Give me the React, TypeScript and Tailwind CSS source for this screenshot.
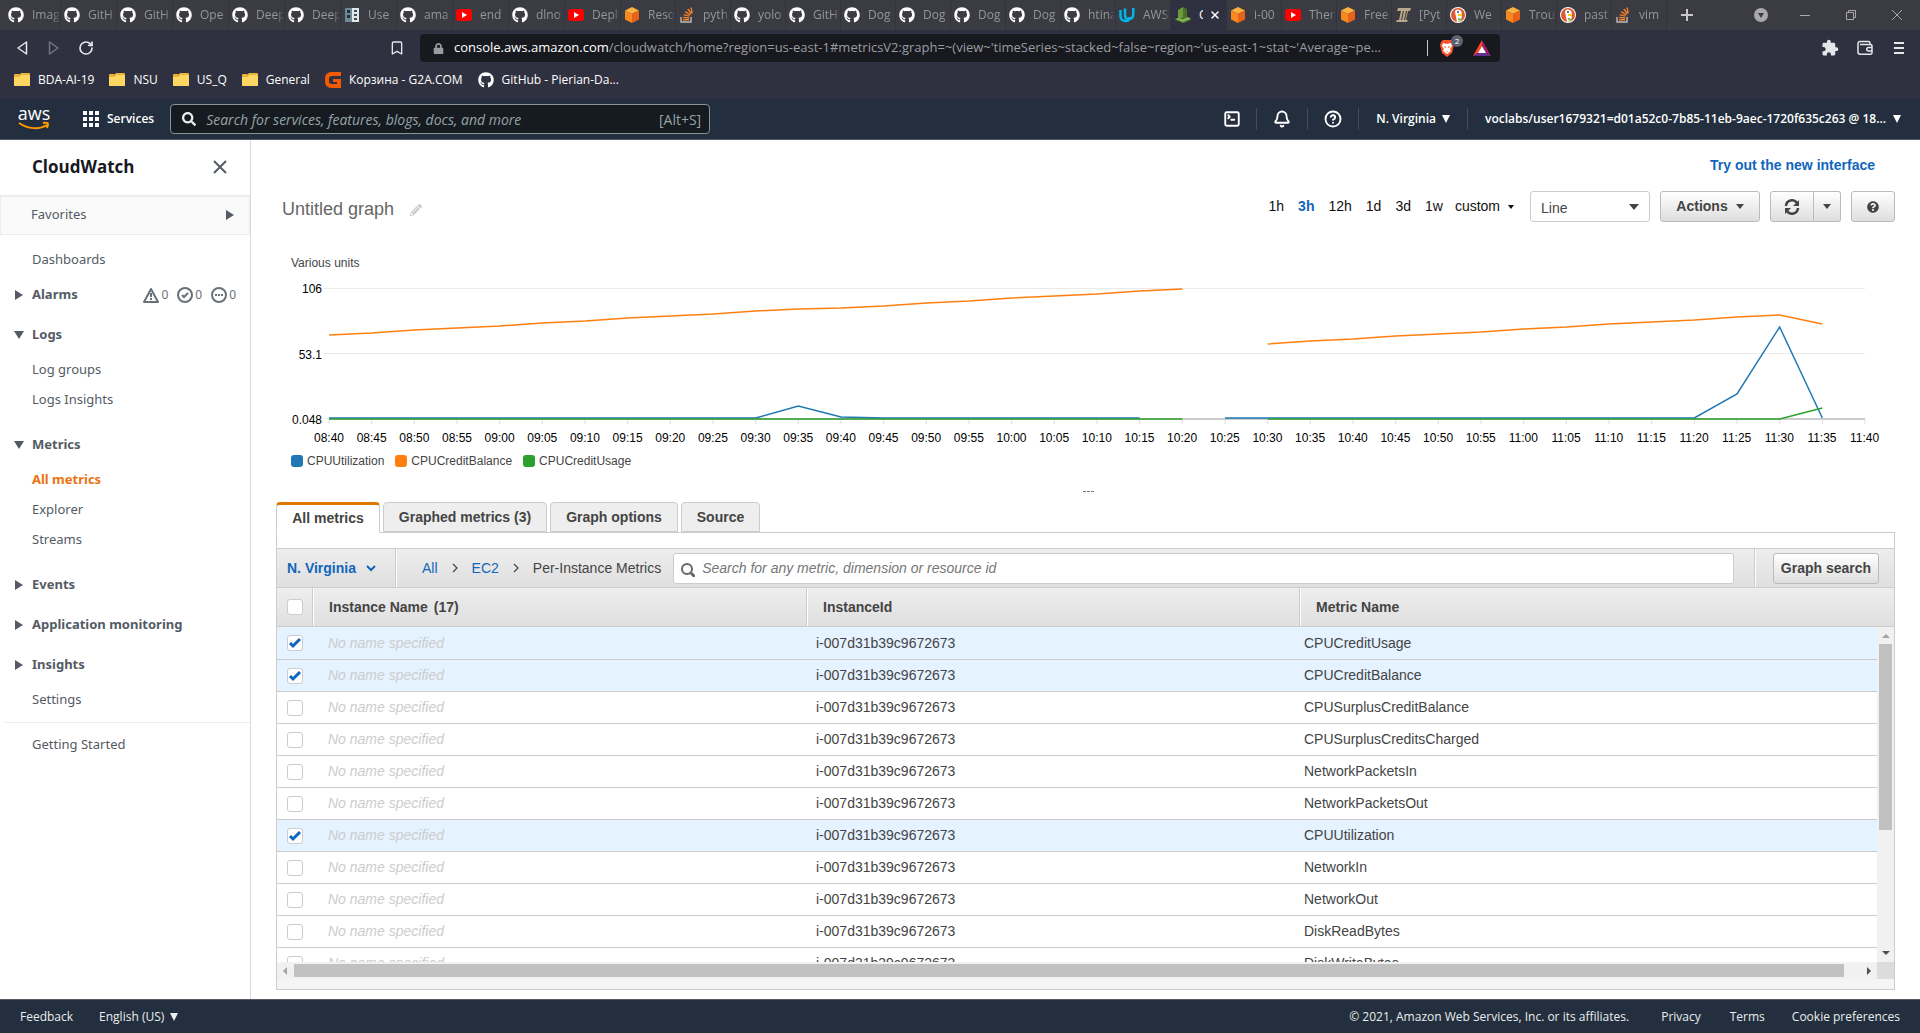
import React from "react";
import { FaGithub, FaLock, FaSearch, FaPencilAlt, FaQuestionCircle } from "react-icons/fa";
import { MdExtension } from "react-icons/md";
import { Bell, Bookmark, CircleHelp, SquareTerminal, X, RotateCw } from "lucide-react";

const UI = "font-['Open_Sans','Noto_Sans',sans-serif]";

/* ---------- small drawings ---------- */

const Cube = () => (
  <svg viewBox="0 0 16 16" className="size-4">
    <path d="M8 0 15 3.5 8 7 1 3.5Z" fill="#fbb040" />
    <path d="M1 3.5 8 7v9L1 12.5Z" fill="#f7891f" />
    <path d="M15 3.5 8 7v9l7-3.5Z" fill="#e8621a" />
  </svg>
);

const CloudWatchIcon = () => (
  <svg viewBox="0 0 16 16" className="size-4 shrink-0">
    <path d="M3 3 8 0v11l-5 1Z" fill="#6c9a3a" />
    <path d="M8 0l4 2v9l-4 1Z" fill="#4b7129" />
    <path d="M0 12l3-1 5 1 5-2 3 2-8 4Z" fill="#86b353" />
    <path d="M0 12l8 3v1l-8-3Zm16 0-8 3v1l8-3Z" fill="#4b7129" />
  </svg>
);

const StackOverflow = () => (
  <svg viewBox="0 0 16 16" className="size-4" fill="none" strokeWidth="1.4">
    <path d="M2 10v5h10v-5" stroke="#bcbbbb" />
    <path d="M4 12.800h6M4.100 10.400l6 .6M4.700 7.600l5.800 1.600M6.200 4.600l5.200 3.200M8.800 2l3.700 4.800M12 .5l1.200 5.800" stroke="#f48024" />
  </svg>
);

const Udacity = () => (
  <svg viewBox="0 0 16 16" className="size-4" fill="none" stroke="#02b3e4" strokeWidth="2.6">
    <path d="M1.500 3v6c0 3 2 5 5 5s4-2 4-4" />
    <path d="M6 1.500v7c0 2 1 3.500 3 3.500 3 0 5.300-1.500 5.300-5V1" />
  </svg>
);

const Duck = () => (
  <svg viewBox="0 0 16 16" className="size-4">
    <circle cx="8" cy="8" r="8" fill="#fff" />
    <circle cx="8" cy="8" r="7" fill="#de5833" />
    <path d="M5 5c0-2 2-3 4-2 2 0 3 2 3 5l-1 6-4 1Z" fill="#fff" />
    <path d="M8 7h4v2H8Z" fill="#fdd20a" />
    <path d="m8 11 4 1-1 2-3-1Z" fill="#67bd47" />
    <circle cx="8" cy="5" r="1" fill="#2d4f8e" />
  </svg>
);

const Pages = () => (
  <svg viewBox="0 0 16 16" className="size-4">
    <path d="M1 1h7v14H1Z" fill="#6f8796" />
    <path d="M8 1h7v14H8Z" fill="#dfe7eb" />
    <path d="M3 3h3v3H3Zm0 5h3v3H3Z" fill="#22303a" />
    <path d="M10 3h3v2h-3Zm0 4h3v2h-3Zm0 4h3v2h-3Z" fill="#3a4f5c" />
  </svg>
);

const Italic = () => (
  <svg viewBox="0 0 16 16" className="size-4">
    <path d="M3 1h13l-1 3h-2l-2 9h2l-1 2H1l1-2h2L6 4H2Z" fill="#b8a88c" />
    <path d="M8 4h1L7 13H6Zm3 0h1l-2 9H9Z" fill="#3c3325" />
  </svg>
);

const G2A = () => (
  <svg viewBox="0 0 16 16" className="size-4">
    <path d="M16 0v4H7a3 3 0 0 0-3 3v2a3 3 0 0 0 3 3h5v-2H8V7h8v9H6a6 6 0 0 1-6-6V6a6 6 0 0 1 6-6Z" fill="#f05a00" />
  </svg>
);

const Folder = () => (
  <svg viewBox="0 0 16 14" className="h-[14px] w-4">
    <path d="M0 2a1 1 0 0 1 1-1h4l2 2v10H1a1 1 0 0 1-1-1Z" fill="#e9b43c" />
    <path d="M6 1 7 0h8a1 1 0 0 1 1 1v12H1Z" fill="#e9b43c" />
    <path d="M0 4h6l1-2h8a1 1 0 0 1 1 1v9a1 1 0 0 1-1 1H1a1 1 0 0 1-1-1Z" fill="#fdd663" />
  </svg>
);

const Lion = () => (
  <svg viewBox="0 0 16 18" className="h-[18px] w-4">
    <path d="M4 1h8l2 2 1 3-2 8-5 4-5-4L1 6l1-3Z" fill="#fb542b" />
    <path d="m4 4 4 1 4-1 1 3-2 3 1 2-4 3-4-3 1-2-2-3Z" fill="#fff" />
    <path d="m5 7 2 1v1L5 8Zm6 0L9 8v1l2-1ZM7 12h2l-1 1Z" fill="#fb542b" />
  </svg>
);

const Bat = () => (
  <svg viewBox="0 0 18 16" className="h-4 w-[18px]">
    <path d="M9 0v6l-4 7-5 3Z" fill="#ff4724" />
    <path d="M9 0v6l4 7 5 3Z" fill="#9e1f63" />
    <path d="M0 16l5-3h8l5 3Z" fill="#662d91" />
    <path d="m9 6 4 7H5Z" fill="#fff" />
  </svg>
);

const Wallet = () => (
  <svg viewBox="0 0 16 16" className="size-4" fill="none" stroke="#e6e6ea" strokeWidth="1.5">
    <path d="M13 4.500V3a1.500 1.500 0 0 0-1.500-1.500H3A2 2 0 0 0 1 3.500V12a2.200 2.200 0 0 0 2.200 2.200h10.300A1.500 1.500 0 0 0 15 12.700V6a1.500 1.500 0 0 0-1.500-1.500H3" />
    <path d="M15 7.500h-3.500a1.800 1.800 0 0 0 0 3.600H15" />
  </svg>
);

const Caret = ({ className = "" }: { className?: string }) => (
  <svg viewBox="0 0 10 6" preserveAspectRatio="none" className={className} fill="currentColor">
    <path d="M0 0h10L5 6Z" />
  </svg>
);

const Tri = ({ open = false }: { open?: boolean }) => (
  <svg viewBox="0 0 10 10" className="size-[10px]" fill="#545b64">
    {open ? <path d="M0 1h10L5 9Z" /> : <path d="M1 0v10l8-5Z" />}
  </svg>
);

const Chevron = ({ className = "", weight = 1.2 }: { className?: string; weight?: number }) => (
  <svg viewBox="0 0 8 10" className={className} fill="none" stroke="currentColor" strokeWidth={weight}>
    <path d="m2 1 4 4-4 4" />
  </svg>
);

/* ---------- browser chrome ---------- */

const gh = <FaGithub className="size-4 text-white" />;
const yt = (
  <span className="flex size-4 items-center">
    <svg viewBox="0 0 16 12" className="h-3 w-4">
      <rect width="16" height="12" rx="3" fill="#f00" />
      <path d="m6 3 5 3-5 3Z" fill="#fff" />
    </svg>
  </span>
);
const so = <StackOverflow />;

const TABS_A: [React.ReactNode, string][] = [
  [gh, "GitH"], [gh, "GitH"], [gh, "Ope"], [gh, "Deep"], [gh, "Deep"], [<Pages />, "Use"],
  [gh, "ama"], [yt, "end"], [gh, "dlno"], [yt, "Depl"],
];
const TABS_B: [React.ReactNode, string][] = [
  [<Cube />, "Reso"], [so, "pyth"], [gh, "yolo"], [gh, "GitH"], [gh, "Dog"], [gh, "Dog"], [gh, "Dog"], [gh, "Dog"],
  [gh, "htina"], [<Udacity />, "AWS"],
];
const TABS_C: [React.ReactNode, string][] = [
  [<Cube />, "i-00"], [yt, "Ther"], [<Cube />, "Free"], [<Italic />, "[Pyt"], [<Duck />, "We"], [<Cube />, "Trou"],
  [<Duck />, "past"], [so, "vim"],
];

function Tab({ icon, text, className }: { icon: React.ReactNode; text: string; className: string }) {
  return (
    <button className={`flex h-full shrink-0 items-center gap-2 border-r border-[#33333b] ${className}`}>
      <span className="shrink-0">{icon}</span>
      <span className="min-w-0 flex-1 overflow-hidden text-left whitespace-nowrap [mask-image:linear-gradient(to_right,#000_75%,transparent)]">
        {text}
      </span>
    </button>
  );
}

function TabStrip() {
  return (
    <div className="flex h-[30px] items-center bg-[#3b3b44] text-[12px] text-[#95959c]">
      <Tab icon={gh} text="Imag" className="w-[61px] pl-2" />
      {TABS_A.map(([i, t], k) => <Tab key={k} icon={i} text={t} className="w-[56px] pl-[3px]" />)}
      {TABS_B.map(([i, t], k) => <Tab key={k} icon={i} text={t} className="w-[55px] pl-[3px]" />)}
      <button className="flex h-full w-[56px] shrink-0 items-center rounded-t bg-[#2f3140] pl-1 text-white">
        <CloudWatchIcon />
        <span className="ml-2 w-1 overflow-hidden text-left">C</span>
        <X className="ml-[6px] size-3" strokeWidth={3} />
      </button>
      {TABS_C.map(([i, t], k) => <Tab key={k} icon={i} text={t} className="w-[55px] pl-[3px]" />)}
      <button aria-label="New tab" className="ml-[13px] text-[#c8c8cc]">
        <svg viewBox="0 0 14 14" className="size-[14px]" stroke="currentColor" strokeWidth="2"><path d="M7 1v12M1 7h12" /></svg>
      </button>
      <div className="ml-auto flex items-center gap-7 pr-[14px] text-[#a8a8ae]">
        <button aria-label="Search tabs">
          <svg viewBox="0 0 14 14" className="size-[14px]"><circle cx="7" cy="7" r="7" fill="#a8a8ae" /><path d="M4 5h6l-3 5Z" fill="#3b3b44" /></svg>
        </button>
        <button aria-label="Minimize" className="mx-1">
          <svg viewBox="0 0 10 10" className="size-[10px]" stroke="currentColor"><path d="M0 5.500h10" /></svg>
        </button>
        <button aria-label="Restore" className="mx-1">
          <svg viewBox="0 0 10 10" className="size-[10px]" stroke="currentColor" fill="none"><path d="M.5 2.500h7v7h-7ZM2.500 2.500v-2h7v7h-2" /></svg>
        </button>
        <button aria-label="Close window" className="mx-1">
          <svg viewBox="0 0 10 10" className="size-[10px]" stroke="currentColor"><path d="m0 0 10 10M10 0 0 10" /></svg>
        </button>
      </div>
    </div>
  );
}

function AddressBar() {
  return (
    <div className="flex h-9 items-center pl-4 text-[#e6e6ea]">
      <button aria-label="Back">
        <svg viewBox="0 0 12 14" className="h-[14px] w-3" fill="none" stroke="#e6e6ea" strokeWidth="1.500" strokeLinejoin="round"><path d="M10.500 1v12L2 7Z" /></svg>
      </button>
      <button aria-label="Forward" className="ml-5">
        <svg viewBox="0 0 12 14" className="h-[14px] w-3" fill="none" stroke="#72737f" strokeWidth="1.500" strokeLinejoin="round"><path d="M1.500 1v12L10 7Z" /></svg>
      </button>
      <button aria-label="Reload" className="ml-[18px]"><RotateCw className="size-4" strokeWidth={2.5} /></button>
      <button aria-label="Bookmark" className="ml-[295px]"><Bookmark className="size-4" /></button>
      <div className="ml-[15px] flex h-7 w-[1080px] items-center rounded bg-[#17191f] pl-[13px] text-[13px] text-[#9b9ca3]">
        <FaLock className="size-[11px]" />
        <span className="ml-[10px] flex-1 whitespace-nowrap"><span className="text-white">console.aws.amazon.com</span>/cloudwatch/home?region=us-east-1#metricsV2:graph=~(view~'timeSeries~stacked~false~region~'us-east-1~stat~'Average~pe...</span>
        <span className="ml-2 h-4 w-px bg-[#c8c8cc]" />
        <button aria-label="Brave Shields" className="relative ml-[11px]">
          <Lion />
          <span className="absolute -top-1 left-3 flex size-3 items-center justify-center rounded-full bg-[#5d6170] text-[8px] text-white">2</span>
        </button>
        <button aria-label="Rewards" className="mr-[9px] ml-[18px]"><Bat /></button>
      </div>
      <div className="ml-auto flex items-center gap-[18px] pr-4">
        <button aria-label="Extensions"><MdExtension className="size-[18px]" /></button>
        <button aria-label="Wallet"><Wallet /></button>
        <button aria-label="Menu" className="ml-[3px] flex w-[10px] flex-col gap-[3px]">
          <span className="h-[2px] bg-[#e6e6ea]" /><span className="h-[2px] bg-[#e6e6ea]" /><span className="h-[2px] bg-[#e6e6ea]" />
        </button>
      </div>
    </div>
  );
}

const BOOKMARKS: [React.ReactNode, string][] = [
  [<Folder />, "BDA-AI-19"], [<Folder />, "NSU"], [<Folder />, "US_Q"], [<Folder />, "General"],
  [<G2A />, "Корзина - G2A.COM"], [gh, "GitHub - Pierian-Da..."],
];

function Bookmarks() {
  return (
    <div className="flex h-[33px] items-center gap-[15px] pb-[5px] pl-[14px] text-[12px] text-white">
      {BOOKMARKS.map(([icon, text]) => (
        <a key={text} href="#" className="flex items-center gap-2 whitespace-nowrap">{icon}{text}</a>
      ))}
    </div>
  );
}

/* ---------- AWS header ---------- */

const Rule = () => <span className="h-[22px] w-px bg-[#414d5c]" />;

function AwsHeader() {
  return (
    <header className="flex h-[41px] shrink-0 items-center border-b border-[#545b64] bg-[#232f3e] text-[12px] font-semibold text-white">
      <a href="#" aria-label="AWS" className="ml-[18px] flex w-8 flex-col items-center">
        <span className="h-[13px] text-[18px] leading-[10px] font-normal">aws</span>
        <svg viewBox="0 0 32 9" className="h-[9px] w-8" fill="none" stroke="#ff9900" strokeWidth="2">
          <path d="M1 2c9 6 20 7 28 2M25 2c5-1 6 0 4 5" />
        </svg>
      </a>
      <span className="ml-4"><Rule /></span>
      <button className="ml-[17px] flex items-center gap-2">
        <svg viewBox="0 0 16 16" className="size-4" fill="#fff">
          {[0, 6, 12].map((y) => [0, 6, 12].map((x) => <rect key={`${x}-${y}`} x={x} y={y} width="4" height="4" />))}
        </svg>
        Services
      </button>
      <label className="ml-4 flex h-[30px] w-[540px] items-center rounded-sm border border-[#879596] bg-[#161a21] pr-2 pl-[11px] font-normal text-[#95a5a6]">
        <FaSearch className="size-[14px] text-[#eaeded]" />
        <input aria-label="Search AWS" className="ml-[10px] min-w-0 flex-1 bg-transparent text-[14px] italic outline-none placeholder:text-[#95a5a6] placeholder:italic" placeholder="Search for services, features, blogs, docs, and more" />
        <span className="text-[14px]">[Alt+S]</span>
      </label>
      <div className="ml-auto flex items-center">
        <button aria-label="CloudShell" className="mr-[15px]"><SquareTerminal className="size-[18px]" strokeWidth={2.5} /></button>
        <Rule />
        <button aria-label="Notifications" className="mx-4"><Bell className="size-[18px]" strokeWidth={2.5} /></button>
        <Rule />
        <button aria-label="Help" className="mx-4"><CircleHelp className="size-[18px]" strokeWidth={2.5} /></button>
        <Rule />
        <button className="mx-[17px] flex items-center gap-[6px]">N. Virginia <Caret className="h-2 w-2" /></button>
        <Rule />
        <button className="mr-[19px] ml-[17px] flex items-center gap-[7px] whitespace-nowrap">voclabs/user1679321=d01a52c0-7b85-11eb-9aec-1720f635c263 @ 18... <Caret className="h-2 w-2" /></button>
      </div>
    </header>
  );
}

/* ---------- sidebar ---------- */

const Item = ({ children, active = false }: { children: React.ReactNode; active?: boolean }) => (
  <a href="#" className={`flex h-[30px] items-center pl-8 ${active ? "font-bold text-[#ec7211]" : ""}`}>{children}</a>
);
const Section = ({ children, open = false, extra }: { children: React.ReactNode; open?: boolean; extra?: React.ReactNode }) => (
  <div className="flex h-10 items-center justify-between pr-[14px] pl-[14px]">
    <button className="flex items-center gap-2 font-bold"><Tri open={open} />{children}</button>
    {extra}
  </div>
);

function AlarmCounts() {
  return (
    <div className="flex items-center gap-[9px] text-[12px] text-[#687078]">
      <span className="flex items-center gap-[2px]">
        <svg viewBox="0 0 16 16" className="size-4" fill="none" stroke="currentColor" strokeWidth="2"><path d="M8 2 15 15H1Z" strokeLinejoin="round" /><path d="M8 6v4M8 11v2" /></svg>0
      </span>
      <span className="flex items-center gap-[2px]">
        <svg viewBox="0 0 16 16" className="size-4" fill="none" stroke="currentColor" strokeWidth="2"><circle cx="8" cy="8" r="7" /><path d="m5 8 2 2 4-4" /></svg>0
      </span>
      <span className="flex items-center gap-[2px]">
        <svg viewBox="0 0 16 16" className="size-4" fill="none" stroke="currentColor" strokeWidth="2"><circle cx="8" cy="8" r="7" /><path d="M4 8h2M7 8h2M10 8h2" /></svg>0
      </span>
    </div>
  );
}

function Sidebar() {
  return (
    <nav className="w-[251px] shrink-0 border-r border-[#d5dbdb] bg-white font-['Noto_Sans',sans-serif] text-[13px] text-[#545b64]">
      <div className="flex h-[55px] items-center justify-between pr-[22px] pb-[2px] pl-8">
        <h2 className="font-['Open_Sans',sans-serif] text-[17px] font-bold text-[#16191f]">CloudWatch</h2>
        <button aria-label="Close navigation">
          <svg viewBox="0 0 16 16" className="size-4" stroke="#545b64" strokeWidth="2"><path d="m2 2 12 12M14 2 2 14" /></svg>
        </button>
      </div>
      <button className="flex h-10 w-full items-center justify-between border border-t-2 border-[#eaeded] bg-[#fafafa] pr-[14px] pb-[2px] pl-[30px]">
        Favorites <Tri />
      </button>
      <div className="pt-[10px]">
        <Item>Dashboards</Item>
        <Section extra={<AlarmCounts />}>Alarms</Section>
        <Section open>Logs</Section>
        <Item>Log groups</Item>
        <Item>Logs Insights</Item>
        <div className="pt-[10px]"><Section open>Metrics</Section></div>
        <Item active>All metrics</Item>
        <Item>Explorer</Item>
        <Item>Streams</Item>
        <div className="pt-[10px]"><Section>Events</Section></div>
        <Section>Application monitoring</Section>
        <Section>Insights</Section>
        <Item>Settings</Item>
        <hr className="my-[7px] ml-[5px] border-[#eaeded]" />
        <Item>Getting Started</Item>
      </div>
    </nav>
  );
}

/* ---------- graph ---------- */

const BTN = "flex h-[31px] items-center justify-center rounded-[3px] border border-[#bbb] bg-linear-to-b from-white to-[#dedede] font-bold text-[#444]";

function GraphToolbar() {
  return (
    <div className="flex h-[31px] items-center text-[14px] text-[#111]">
      <h1 className="flex items-center gap-4 pt-[6px] pl-[6px] text-[18px] text-[#666]">
        Untitled graph <button aria-label="Rename graph"><FaPencilAlt className="size-3 text-[#ccc]" /></button>
      </h1>
      <div className="ml-auto flex items-center gap-[14px] pr-4">
        <button>1h</button>
        <button className="font-bold text-[#1166bb]">3h</button>
        <button>12h</button>
        <button>1d</button>
        <button>3d</button>
        <button>1w</button>
        <button className="-ml-[2px] flex items-center gap-2">custom <Caret className="h-1 w-[6px]" /></button>
      </div>
      <div className="flex items-center gap-[10px]">
        <label className="relative flex items-center">
          <select aria-label="Graph type" className="h-[31px] w-[120px] appearance-none rounded-[3px] border border-[#ccc] bg-white pt-[3px] pl-[10px] text-[#444]">
            <option>Line</option>
          </select>
          <Caret className="pointer-events-none absolute right-[11px] h-[6px] w-[10px] text-[#444]" />
        </label>
        <button className={`${BTN} w-[100px] gap-2`}>Actions <Caret className="h-[5px] w-2" /></button>
        <div className="flex">
          <button aria-label="Refresh" className={`${BTN} w-11 rounded-r-none`}>
            <svg viewBox="0 0 16 16" className="size-4" fill="none" stroke="#444" strokeWidth="2.500">
              <path d="M2 7a6 6 0 0 1 11-3M14 9a6 6 0 0 1-11 3" /><path d="M15 1v6H9ZM1 15V9h6Z" fill="#444" stroke="none" />
            </svg>
          </button>
          <button aria-label="Refresh options" className={`${BTN} w-[27px] rounded-l-none border-l-0`}><Caret className="h-[5px] w-2" /></button>
        </div>
        <button aria-label="Help" className={`${BTN} w-11`}><FaQuestionCircle className="size-3" /></button>
      </div>
    </div>
  );
}

const TIMES = Array.from({ length: 37 }, (_, i) => {
  const m = 8 * 60 + 40 + i * 5;
  return `${String(Math.floor(m / 60)).padStart(2, "0")}:${String(m % 60).padStart(2, "0")}`;
});
const STEP = 40;
const line = (start: number, ys: number[]) => ys.map((y, i) => `${(start + i) * STEP},${y}`).join(" ");
const flat = (n: number, y: number) => Array.from({ length: n }, () => y);

const BALANCE_1 = [49, 47, 44, 42, 40, 37, 35, 32, 30, 28, 25, 23, 22, 20, 17, 15, 12, 10, 8, 5, 3];
const BALANCE_2 = [58, 55, 53, 50, 48, 46, 43, 41, 38, 36, 34, 31, 29, 38];
const UTIL_1 = [...flat(11, 132), 120, 131, ...flat(7, 132)];
const UTIL_2 = [...flat(12, 132), 108, 41, 132];
const USAGE_1 = flat(21, 133);
const USAGE_2 = [...flat(13, 133), 122];

function Chart() {
  return (
    <figure className="pt-[33px] pl-[15px] text-[12px]">
      <figcaption className="leading-4 text-[#444]">Various units</figcaption>
      <div className="mt-[10px] flex pr-[30px]">
        <div className="flex h-[147px] w-[31px] shrink-0 flex-col items-end justify-between leading-4 text-black">
          <span>106</span><span>53.1</span><span>0.048</span>
        </div>
        <div className="ml-[7px] flex-1 pt-[5px]">
          <svg viewBox="0 0 1440 140" preserveAspectRatio="none" className="block h-[140px] w-full overflow-visible" fill="none">
            <g stroke="#eaeaea">
              <path d="M-5 2.500H1440M-5 67.500H1440M-5 132.500H0" />
              {TIMES.map((t, i) => <path key={t} d={`M${i * STEP} 133v5`} stroke="#ddd" vectorEffect="non-scaling-stroke" />)}
            </g>
            <path d="M0 133H1440" stroke="#ccc" strokeWidth="2" />
            <g strokeWidth="1.500">
              <polyline points={line(0, UTIL_1)} stroke="#1f77b4" vectorEffect="non-scaling-stroke" />
              <polyline points={line(21, UTIL_2)} stroke="#1f77b4" vectorEffect="non-scaling-stroke" />
              <polyline points={line(0, BALANCE_1)} stroke="#ff7f0e" vectorEffect="non-scaling-stroke" />
              <polyline points={line(22, BALANCE_2)} stroke="#ff7f0e" vectorEffect="non-scaling-stroke" />
              <polyline points={line(0, USAGE_1)} stroke="#2ca02c" vectorEffect="non-scaling-stroke" />
              <polyline points={line(22, USAGE_2)} stroke="#2ca02c" vectorEffect="non-scaling-stroke" />
            </g>
          </svg>
          <div className="mt-[4px] flex justify-between leading-4 text-black">
            {TIMES.map((t) => <span key={t} className="flex w-0 justify-center"><span>{t}</span></span>)}
          </div>
        </div>
      </div>
      <div className="mt-[7px] flex gap-[11px] leading-4 text-[#444]">
        <span className="flex items-center gap-1"><i className="size-3 rounded-[3px] bg-[#1f77b4]" />CPUUtilization</span>
        <span className="flex items-center gap-1"><i className="size-3 rounded-[3px] bg-[#ff7f0e]" />CPUCreditBalance</span>
        <span className="flex items-center gap-1"><i className="size-3 rounded-[3px] bg-[#2ca02c]" />CPUCreditUsage</span>
      </div>
      <div className="mt-[22px] flex h-[2px] justify-center gap-px pr-[10px]">
        <i className="h-px w-[3px] bg-[#777]" /><i className="h-px w-[3px] bg-[#777]" /><i className="h-px w-[3px] bg-[#777]" />
      </div>
    </figure>
  );
}

/* ---------- metrics panel ---------- */

function Check({ label, checked = false }: { label: string; checked?: boolean }) {
  return (
    <span className="relative ml-[10px] block size-4">
      <input type="checkbox" aria-label={label} defaultChecked={checked} className="peer block size-4 appearance-none rounded-[3px] border border-[#ccc] bg-white" />
      <svg viewBox="0 0 16 16" className="pointer-events-none absolute inset-0 hidden size-4 peer-checked:block" fill="none" stroke="#1166bb" strokeWidth="3">
        <path d="m3 8 3 3 7-7" />
      </svg>
    </span>
  );
}

const METRICS = [
  "CPUCreditUsage", "CPUCreditBalance", "CPUSurplusCreditBalance", "CPUSurplusCreditsCharged", "NetworkPacketsIn", "NetworkPacketsOut",
  "CPUUtilization", "NetworkIn", "NetworkOut", "DiskReadBytes", "DiskWriteBytes",
];
const SELECTED = ["CPUCreditUsage", "CPUCreditBalance", "CPUUtilization"];
const TH = "h-[39px] border-b border-[#ccc] text-left font-bold";
const TH_DIV = "border-l pl-4 shadow-[inset_1px_0_0_#fff]";

function MetricsTable() {
  return (
    <div className="relative min-h-0 flex-1 overflow-hidden">
      <table className="w-full table-fixed border-separate border-spacing-0 text-[14px]">
        <colgroup><col className="w-[35px]" /><col className="w-[494px]" /><col className="w-[493px]" /><col /></colgroup>
        <thead className="bg-linear-to-b from-[#eee] to-[#dfdfdf] text-[#444]">
          <tr>
            <th className={TH}><Check label="Select all metrics" /></th>
            <th className={`${TH} ${TH_DIV}`}>Instance Name<span className="ml-[6px]">(17)</span></th>
            <th className={`${TH} ${TH_DIV}`}>InstanceId</th>
            <th className={`${TH} ${TH_DIV}`}>Metric Name</th>
          </tr>
        </thead>
        <tbody>
          {METRICS.map((m, i) => {
            const on = SELECTED.includes(m);
            return (
              <tr key={m} className={on ? "bg-[#e5f2ff]" : "bg-white"}>
                <td className={`border-b border-[#ccc] ${i === 0 ? "h-[33px]" : "h-8"}`}><Check label={m} checked={on} /></td>
                <td className="border-b border-[#ccc] pl-4 text-[#ccc] italic">No name specified</td>
                <td className="border-b border-[#ccc] pl-[10px] text-[#444]">i-007d31b39c9672673</td>
                <td className="border-b border-[#ccc] pl-[5px] text-[#444]">{m}</td>
              </tr>
            );
          })}
        </tbody>
      </table>
      <div className="absolute top-[39px] right-0 bottom-0 flex w-[17px] flex-col items-center bg-[#f1f1f1]">
        <Caret className="mt-[7px] mb-[6px] h-1 w-2 rotate-180 text-[#a3a3a3]" />
        <div className="h-[186px] w-[13px] bg-[#c1c1c1]" />
        <Caret className="mt-auto mb-[7px] h-1 w-2 text-[#505050]" />
      </div>
    </div>
  );
}

const TAB = "h-[30px] rounded-t border border-[#ccc] bg-[#eee]";

function MetricsPanel() {
  return (
    <section className="mt-[9px] flex min-h-0 flex-1 flex-col text-[14px] text-[#444]">
      <div className="-mb-px flex gap-[3px] font-bold">
        <button className="z-10 h-[31px] w-[104px] rounded-t border border-t-[3px] border-[#ccc] border-t-[#e07700] border-b-white bg-white">All metrics</button>
        <button className={`${TAB} w-[164px]`}>Graphed metrics (3)</button>
        <button className={`${TAB} w-[128px]`}>Graph options</button>
        <button className={`${TAB} w-[79px]`}>Source</button>
      </div>
      <div className="flex min-h-0 flex-1 flex-col border border-[#ccc] pt-[15px]">
        <div className="flex h-10 shrink-0 items-center border-y border-[#ccc] bg-linear-to-b from-[#eee] to-[#dfdfdf]">
          <button className="flex h-full w-[119px] items-center gap-[11px] border-r border-[#ccc] pl-[10px] font-bold text-[#1166bb] shadow-[1px_0_0_#fff]">
            N. Virginia <Chevron className="h-[10px] w-2 rotate-90" weight={2} />
          </button>
          <a href="#" className="ml-[26px] text-[#1166bb]">All</a>
          <Chevron className="mx-[13px] h-[10px] w-2" />
          <a href="#" className="text-[#1166bb]">EC2</a>
          <Chevron className="mx-[13px] h-[10px] w-2" />
          <span>Per-Instance Metrics</span>
          <label className="mr-5 ml-3 flex h-[31px] flex-1 items-center rounded-[3px] border border-[#ccc] bg-white pl-[7px]">
            <svg viewBox="0 0 14 14" className="mt-1 size-[14px]" fill="none" stroke="#666" strokeWidth="2"><circle cx="6" cy="6" r="5" /><path d="m10 10 4 4" strokeWidth="3" /></svg>
            <input aria-label="Search metrics" className="ml-[7px] min-w-0 flex-1 bg-transparent italic outline-none placeholder:text-[#777] placeholder:italic" placeholder="Search for any metric, dimension or resource id" />
          </label>
          <div className="flex h-full items-center border-l border-[#ccc] pr-[15px] pl-[18px] shadow-[inset_1px_0_0_#fff]">
            <button className={`${BTN} w-[106px]`}>Graph search</button>
          </div>
        </div>
        <MetricsTable />
        <div className="flex h-[17px] shrink-0 items-center bg-[#f1f1f1]">
          <Caret className="mr-[5px] ml-1 h-1 w-2 rotate-90 text-[#a3a3a3]" />
          <div className="h-[13px] flex-1 bg-[#c1c1c1]" />
          <Caret className="mr-1 ml-[21px] h-1 w-2 -rotate-90 text-[#505050]" />
          <div className="h-full w-[17px] bg-[#dcdcdc]" />
        </div>
        <div className="h-[10px] shrink-0 bg-[#f5f5f5]" />
      </div>
    </section>
  );
}

export default function App() {
  return (
    <div className={`flex h-screen flex-col overflow-hidden bg-white ${UI}`}>
      <div className="shrink-0 bg-[#2f3140]">
        <TabStrip />
        <AddressBar />
        <Bookmarks />
      </div>
      <AwsHeader />
      <div className="flex min-h-0 flex-1">
        <Sidebar />
        <main className="flex min-w-0 flex-1 flex-col px-[25px] pb-[9px] font-['Liberation_Sans',Arial,sans-serif]">
          <div className="flex h-[51px] items-center justify-end pr-5 text-[14px] font-bold">
            <a href="#" className="text-[#1166bb]">Try out the new interface</a>
          </div>
          <GraphToolbar />
          <Chart />
          <MetricsPanel />
        </main>
      </div>
      <footer className="flex h-[34px] shrink-0 items-center border-t border-[#545b64] bg-[#232f3e] pr-5 pl-5 text-[12px] font-medium text-[#eaeded]">
        <a href="#">Feedback</a>
        <button className="ml-[26px] flex items-center gap-[6px]">English (US) <Caret className="h-2 w-2" /></button>
        <span className="ml-auto">© 2021, Amazon Web Services, Inc. or its affiliates.</span>
        <a href="#" className="ml-8">Privacy</a>
        <a href="#" className="ml-[29px]">Terms</a>
        <a href="#" className="ml-[27px]">Cookie preferences</a>
      </footer>
    </div>
  );
}
